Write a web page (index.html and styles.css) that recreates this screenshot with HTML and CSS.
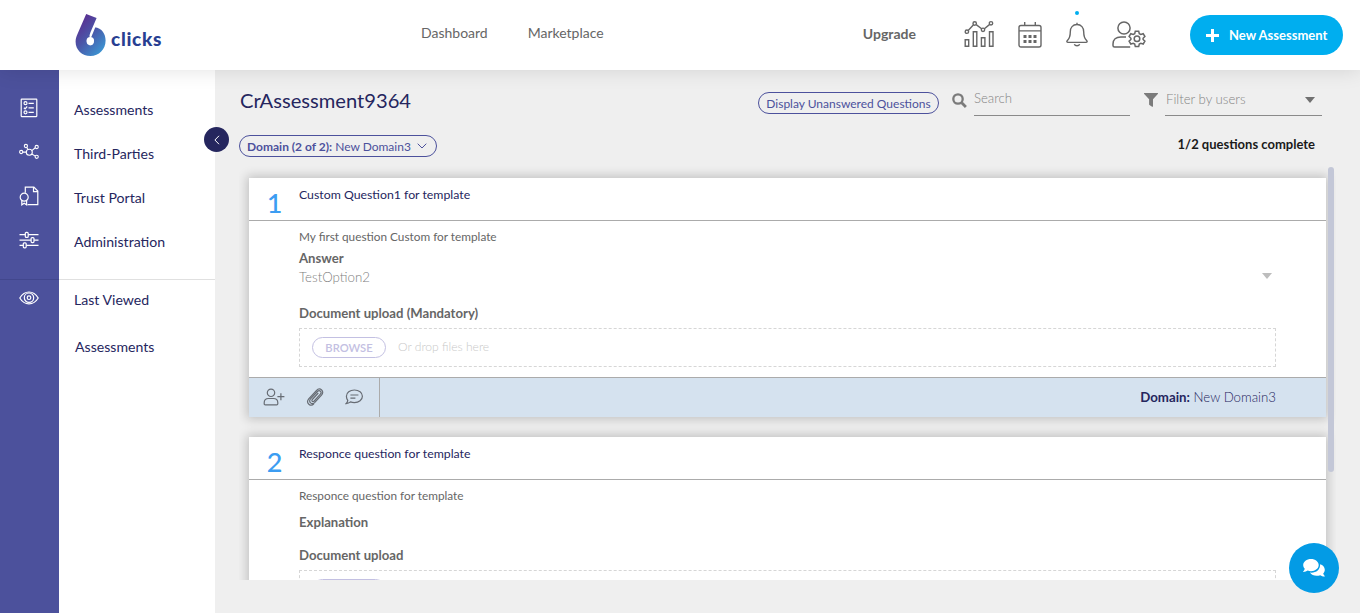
FILE: index.html
```html
<!DOCTYPE html>
<html lang="en">
<head>
<meta charset="utf-8">
<title>6clicks - CrAssessment9364</title>
<link rel="stylesheet" href="styles.css">
</head>
<body>
<header class="topbar">
  <a class="logo">
    <svg class="logo-mark" width="32" height="44" viewBox="0 0 32 44">
      <defs><linearGradient id="brand" x1="0.15" y1="0.1" x2="0.85" y2="1"><stop offset="0" stop-color="#5b2d90"/><stop offset="0.45" stop-color="#4a56a8"/><stop offset="1" stop-color="#3a9bd6"/></linearGradient></defs>
      <path fill="url(#brand)" d="M11.2 1 21.6 5 15.5 19.3C14.4 22 14 24 15.3 25.2A3.6 3.6 0 1 0 18.8 28.1C18.8 26 17.4 24.800 15.400 24.900L19.600 14.200C27 15 30.600 21 30.600 27.500C30.600 36.300 24 43 15.500 43C7 43 .6 36.800 .6 28.700C.6 25.500 1.400 23.500 2.400 21.200Z"/>
      <path fill="none" stroke="#fff" stroke-width="1.300" d="M19.900 13.600 15.600 24"/>
      <circle cx="15.300" cy="27.600" r="3.700" fill="#fff"/>
    </svg>
    <span class="logo-name">clicks</span>
  </a>
  <nav class="topnav"><a>Dashboard</a><a>Marketplace</a></nav>
  <div class="topright">
    <a class="upgrade">Upgrade</a>
    <svg class="ticon chart" width="31" height="28" viewBox="0 0 31 28" fill="none" stroke="#666" stroke-width="1.4"><path d="M1.200 19.700h3.500v6.600H1.200zM9.300 11.700h3.500v14.600H9.300zM17.400 17.700h3.500v8.600h-3.500zM25.500 11.700H29v14.600h-3.500z"/><circle cx="2.900" cy="11.700" r="1.700"/><circle cx="10.700" cy="3.500" r="1.700"/><circle cx="19" cy="9.800" r="1.700"/><circle cx="27" cy="3.300" r="1.700"/><path d="m4.200 10.400 5.300-5.600M12.200 4.600l5.400 4.100M20.400 8.700l5.300-4.300"/></svg>
    <svg class="ticon calendar" width="24" height="27" viewBox="0 0 24 27" fill="none" stroke="#666" stroke-width="1.400"><rect x="1" y="4.500" width="22" height="21.500" rx="2"/><path d="M1 9.900h22M6.700 1v4M17.300 1v4"/><path fill="#666" stroke="none" d="M5.500 14h3v3h-3zM10.500 14h3v3h-3zM15.500 14h3v3h-3zM5.500 19h3v3h-3zM10.500 19h3v3h-3zM15.500 19h3v3h-3z"/></svg>
    <span class="bell"><i class="dot"></i><svg width="22" height="25" viewBox="0 0 22 25" fill="none" stroke="#666" stroke-width="1.400"><path d="M11 .8v1.700M11 2.500c-4.300 0-6.700 3.200-6.700 7.200 0 5.300-1.300 7.300-2.900 8.800-1 1-.5 1.900.6 1.900h18c1.100 0 1.600-.9.600-1.900-1.600-1.500-2.900-3.500-2.900-8.800 0-4-2.400-7.200-6.700-7.200zM8.300 22.300c1 2 4.400 2 5.400 0"/></svg></span>
    <svg class="ticon user" width="34" height="27" viewBox="0 0 34 27" fill="none" stroke="#666" stroke-width="1.500"><circle cx="12" cy="7" r="6.100"/><path d="M14 15.900H8.800C4 15.900 1 18.800 1 23v1.500c0 1 .5 1.500 1.500 1.500h15.700"/><circle cx="25" cy="17.800" r="2.800"/><path d="m23.300 10.200h3.400l.6 2.500 1.500.8 2.400-.8 1.700 2.800-1.800 1.800v1.200l1.800 1.700-1.700 2.800-2.400-.7-1.500.8-.6 2.500h-3.400l-.6-2.500-1.500-.8-2.400.7-1.700-2.800 1.800-1.700v-1.200l-1.800-1.800 1.700-2.800 2.400.8 1.500-.8z"/></svg>
    <button class="new-btn"><svg width="13" height="13" viewBox="0 0 13 13"><path d="M5 0h3v5h5v3H8v5H5V8H0V5h5z" fill="#fff"/></svg>New Assessment</button>
  </div>
</header>
<div class="shell">
  <aside class="rail">
    <div class="rail-top">
      <svg width="20" height="20" viewBox="0 0 20 20" fill="none" stroke="#fff" stroke-width="1.200"><rect x="2.200" y="1.200" width="15.600" height="17.400" rx=".5"/><circle cx="6.500" cy="5.200" r="1.500"/><path d="m4.900 9.700 1.200 1.100 2.100-2.300"/><circle cx="6.500" cy="14.300" r="1.500"/><path d="M9.500 5.400h5.300M9.500 9.900h5.300M9.500 14.400h5.300"/></svg>
      <svg width="20" height="20" viewBox="0 0 20 20" fill="none" stroke="#fff" stroke-width="1.100"><circle cx="10.300" cy="10.300" r="3"/><circle cx="2.200" cy="10" r="1.600"/><circle cx="6.900" cy="4" r="1.600"/><circle cx="17.700" cy="5" r="1.600"/><circle cx="17.700" cy="14.800" r="1.600"/><path d="M3.800 10.100h3.500M7.700 5.300l1.200 2.300M16.300 5.800l-3.500 2.800M12.800 12l3.500 2.100"/></svg>
      <svg width="20" height="20" viewBox="0 0 20 20" fill="none" stroke="#fff" stroke-width="1.200"><path d="M6.300 6.700V1.200h8.600l3.900 3.900v13.500H8.500M14.500 1.400v4.200h4"/><circle cx="5.200" cy="11.200" r="4"/><path d="M2.800 14.600v4.200l2.400-1.500 2.400 1.500v-4.200"/></svg>
      <svg width="20" height="20" viewBox="0 0 20 20" fill="none" stroke="#fff" stroke-width="1.200"><path d="M.5 4.700h5.800M9.200 4.700H19.500M.5 10.100h11.600M15.100 10.100h4.400M.5 15.300h3.800M7.300 15.300h12.200"/><rect x="6.300" y="2.400" width="2.900" height="5" rx="1"/><rect x="12.100" y="7.600" width="2.900" height="5" rx="1"/><rect x="4.300" y="12.800" width="2.900" height="5" rx="1"/></svg>
    </div>
    <div class="rail-bottom">
      <svg width="20" height="14" viewBox="0 0 20 14" fill="none" stroke="#fff" stroke-width="1.200"><path d="M.8 7C3 3.300 6.200 1 10 1s7 2.300 9.200 6c-2.200 3.700-5.400 5.800-9.200 5.800S3 10.700.8 7z"/><circle cx="10" cy="6.700" r="4.700"/><circle cx="10" cy="6.700" r="1.800"/></svg>
    </div>
  </aside>
  <nav class="side">
    <div class="side-top"><a>Assessments</a><a>Third-Parties</a><a>Trust Portal</a><a>Administration</a></div>
    <div class="side-bottom"><a>Last Viewed</a><a class="recent">Assessments</a></div>
    <button class="collapse"><svg width="6" height="10" viewBox="0 0 6 10" fill="none" stroke="#fff"><path d="M5 .8.9 5 5 9.200"/></svg></button>
  </nav>
  <main class="main">
    <div class="toolbar">
      <h1>CrAssessment9364</h1>
      <button class="pill unanswered">Display Unanswered Questions</button>
      <svg class="search-icon" width="15" height="15" viewBox="0 0 15 15" fill="none" stroke="#7b7b7b"><circle cx="6" cy="6" r="4.700" stroke-width="2.300"/><path d="m9.700 9.700 4.200 4.200" stroke-width="2.800"/></svg>
      <div class="field search">Search</div>
      <svg class="funnel" width="14" height="14" viewBox="0 0 14 14"><path fill="#7b7b7b" d="M.5 0h13c.5 0 .7.600.3 1L9 6.200v7.100c0 .5-.5.700-.9.400L5.500 12c-.3-.2-.4-.4-.4-.7V6.200L.2 1C-.2.600 0 0 .5 0z"/></svg>
      <div class="field users">Filter by users<i class="caret"></i></div>
    </div>
    <div class="subbar">
      <button class="pill domain"><b>Domain (2 of 2):</b>&nbsp;New Domain3<svg width="10" height="6" viewBox="0 0 10 6" fill="none" stroke="#4c519c"><path d="m.7.700 4.300 4.300L9.300.7"/></svg></button>
      <span class="progress">1/2 questions complete</span>
    </div>
    <div class="list">
      <article class="card">
        <div class="card-head"><span class="num">1</span><span class="q">Custom Question1 for template</span></div>
        <div class="card-body">
          <p class="desc">My first question Custom for template</p>
          <p class="label">Answer</p>
          <div class="select">TestOption2<i class="caret light"></i></div>
          <p class="label doc">Document upload (Mandatory)</p>
          <div class="drop"><button class="browse">BROWSE</button><span>Or drop files here</span></div>
        </div>
        <div class="card-foot">
          <div class="actions">
            <svg width="22" height="18" viewBox="0 0 22 18" fill="none" stroke="#676c74" stroke-width="1.200"><circle cx="8" cy="4.800" r="3.700"/><path d="M1.200 14.700c0-2.800 1.800-4.200 4.300-4.200h5c2.500 0 4.300 1.400 4.300 4.200v1c0 .7-.4 1.100-1.100 1.100H2.300c-.7 0-1.100-.4-1.100-1.100zM14.400 8.700h7M17.900 5.200v7"/></svg>
            <svg width="18" height="18" viewBox="0 0 18 18" fill="none" stroke="#676c74" stroke-width="1.200"><path d="m12.300 5-6 6.500c-.9 1-.1 2.200.8 2.100.5 0 .8-.3 1.100-.6l6.200-6.800c2-2.200-.9-4.900-3-2.700L4.500 10.900c-2.600 3 1.500 6.400 4.100 3.700l6.900-7.500c3.600-4-1.500-8.300-5.200-4.500L2.700 10.900c-3.300 4.200 2 8.200 5.200 5"/></svg>
            <svg width="18" height="16" viewBox="0 0 18 16" fill="none" stroke="#676c74" stroke-width="1.200"><path d="M9.400 1c4.500 0 8 2.700 8 6.300s-3.500 6.300-8 6.300c-1.500 0-2.700-.2-3.900-.7-1.200 1-2.700 1.600-4.400 1.700 1-1 1.600-2 1.700-3.200-.9-1.200-1.400-2.500-1.400-4.100C1.400 3.700 4.900 1 9.400 1zM5.400 6h8M5.400 9.100h5"/></svg>
          </div>
          <div class="foot-domain"><b>Domain:</b> New Domain3</div>
        </div>
      </article>
      <article class="card">
        <div class="card-head"><span class="num">2</span><span class="q">Responce question for template</span></div>
        <div class="card-body second">
          <p class="desc">Responce question for template</p>
          <p class="label expl">Explanation</p>
          <p class="label doc">Document upload</p>
          <div class="drop"><button class="browse" aria-label="Browse"></button></div>
        </div>
      </article>
      <i class="thumb"></i>
    </div>
  </main>
</div>
<button class="chat"><svg width="22" height="18" viewBox="0 0 22 18"><path fill="#fff" d="M8 0c4.300 0 7.700 2.700 7.700 6.100S12.300 12.200 8 12.200c-1.200 0-2.300-.2-3.300-.6-1.200.8-2.700 1.300-4.300 1.300-.3 0-.4-.3-.2-.5.700-.7 1.300-1.700 1.600-2.600C.7 8.800.2 7.500.2 6.100.2 2.700 3.700 0 8 0z"/><path fill="#fff" d="M17.100 5.200c2.800.8 4.700 2.900 4.700 5.500 0 1.400-.6 2.700-1.600 3.700.3 1 .9 1.900 1.600 2.600.2.200.1.500-.2.500-1.700 0-3.200-.5-4.300-1.300-4 1.400-8.500.4-10.300-2.600 5.600.7 10.400-2.900 10.100-8.400z"/></svg></button>
</body>
</html>
```
FILE: styles.css
```css
* { box-sizing: border-box; }
body { margin: 0; height: 613px; overflow: hidden; background: #efefef; font-family: Lato, "Open Sans", sans-serif; font-size: 14px; color: #25265e; }
button { font: inherit; border: 0; padding: 0; margin: 0; background: none; color: inherit; }
h1, p { margin: 0; }
svg { display: block; flex: none; }

.topbar { position: relative; z-index: 3; display: flex; align-items: center; height: 70px; background: #fff; box-shadow: 0 0 20px rgba(0, 0, 0, .12); }
.logo { display: flex; width: 421px; height: 44px; padding-left: 75px; }
.logo-name { margin-left: 4px; padding-top: 15px; font-size: 19px; letter-spacing: .7px; line-height: 22px; font-weight: 900; color: #283f92; }
.topnav { display: flex; gap: 40px; color: #666; line-height: 20px; margin-top: -4px; }
.topright { display: flex; align-items: center; margin-left: auto; padding-right: 17px; }
.upgrade { color: #666; font-weight: 700; line-height: 20px; margin: -2px 48px 0 0; }
.chart { margin: -2px 23px 0 0; }
.calendar { margin: -2px 24px 0 0; }
.bell { position: relative; margin: -2px 24px 0 0; }
.bell .dot { position: absolute; left: 9px; top: -11px; width: 4px; height: 4px; border-radius: 50%; background: #00aeef; }
.user { margin: -2px 44px 0 0; }
.new-btn { display: flex; align-items: center; gap: 10px; width: 153px; height: 40px; padding-left: 16px; border-radius: 20px; background: #00aeef; color: #fff; font-size: 13px; font-weight: 700; white-space: nowrap; }

.shell { display: flex; height: 543px; }
.rail { width: 59px; background: #4c519c; }
.rail-top { display: flex; flex-direction: column; align-items: center; gap: 24px; height: 210px; padding: 28px 1px 0 0; border-bottom: 1px solid #42478d; }
.rail-bottom { display: flex; justify-content: center; padding: 11px 1px 0 0; }
.side { position: relative; width: 156px; background: #fff; font-size: 14.100px; }
.side a { display: block; height: 44px; line-height: 44px; padding-left: 15px; }
.side-top { height: 210px; padding-top: 18px; border-bottom: 1px solid #e0e0e0; }
.side-bottom a { line-height: 40px; }
.side-bottom a.recent { padding: 3px 0 0 16px; }
.collapse { position: absolute; z-index: 2; left: 145px; top: 57px; display: flex; align-items: center; justify-content: center; width: 25px; height: 25px; border-radius: 50%; background: #25265e; }

.main { flex: 1; padding-left: 24px; }
.toolbar { display: flex; align-items: flex-start; height: 65px; padding-top: 19px; }
.toolbar h1 { width: 519px; padding-left: 1px; font-size: 20.150px; font-weight: 400; line-height: 22px; }
.pill { display: flex; align-items: center; height: 22px; border: 1px solid #4c519c; border-radius: 11px; color: #4c519c; font-size: 12px; white-space: nowrap; }
.unanswered { width: 181px; margin-top: 3px; justify-content: center; }
.search-icon { margin: 4px 7px 0 13px; }
.field { position: relative; display: flex; justify-content: space-between; height: 27px; border-bottom: 1px solid #8a8a8a; color: #858585; font-size: 13.200px; line-height: 18px; font-weight: 300; }
.search { width: 156px; }
.funnel { margin: 4px 7px 0 14px; }
.users { width: 157px; padding: 1px 7px 0 1px; }
.caret { border: 5.500px solid transparent; border-top: 6px solid #707070; border-bottom: 0; margin-top: 7px; height: 0; }
.caret.light { border-top-color: #bdbdbd; margin-top: 6px; }
.subbar { display: flex; justify-content: space-between; height: 30px; padding-right: 45px; }
.domain { width: 198px; padding-left: 7px; }
.domain b { font-weight: 700; }
.domain svg { margin-left: 6px; }
.progress { color: #1a1a1a; font-size: 13px; font-weight: 700; line-height: 19px; }

.list { position: relative; width: 1097px; height: 415px; overflow: hidden; padding: 13px 10px 0; }
.card { width: 1077px; margin-bottom: 20px; background: #fff; box-shadow: 0 0 10px 2px rgba(0, 0, 0, .2); }
.card-head { display: flex; height: 43px; border-bottom: 1px solid #ababab; }
.num { width: 51px; margin-right: -1px; text-align: center; color: #3c9df2; font-size: 27px; font-weight: 500; line-height: 49px; }
.q { font-size: 12.300px; line-height: 34px; }
.card-body { height: 156px; padding: 7px 50px 0; color: #666; }
.desc { font-size: 11.800px; line-height: 18px; }
.label { font-size: 13.150px; font-weight: 700; line-height: 18px; margin-top: 3px; }
.select { display: flex; justify-content: space-between; padding-right: 4px; color: #808080; font-size: 13.300px; font-weight: 300; line-height: 20px; }
.doc { margin-top: 17px; }
.drop { display: flex; align-items: center; height: 39px; margin-top: 6px; border: 1px dashed #d6d6d6; padding-left: 12px; gap: 12px; color: #c9c9c9; font-size: 12.100px; line-height: 14px; font-weight: 300; }
.drop span { margin-top: -2px; }
.browse { width: 74px; height: 21px; border: 1px solid #c3c0e2; border-radius: 11px; color: #c3c0e2; font-size: 11.200px; font-weight: 600; }
.card-foot { display: flex; justify-content: space-between; height: 40px; border-top: 1px solid #ababab; background: #d5e2ef; }
.actions { display: flex; align-items: center; gap: 21px; width: 131px; padding: 0 0 1px 14px; border-right: 1px solid #ababab; }
.foot-domain { padding-right: 50px; font-size: 13.250px; line-height: 39px; font-weight: 300; }
.foot-domain b { font-weight: 700; }
.card-body.second { height: 180px; }
.second .expl { margin-top: 8px; }
.second .doc { margin-top: 15px; }
.thumb { position: absolute; left: 1089px; top: 2px; width: 6px; height: 305px; border-radius: 3px; background: #c3c7d7; }
.chat { position: absolute; z-index: 4; left: 1289px; top: 543px; display: flex; align-items: center; justify-content: center; width: 50px; height: 50px; border-radius: 50%; background: #039be5; }
```
